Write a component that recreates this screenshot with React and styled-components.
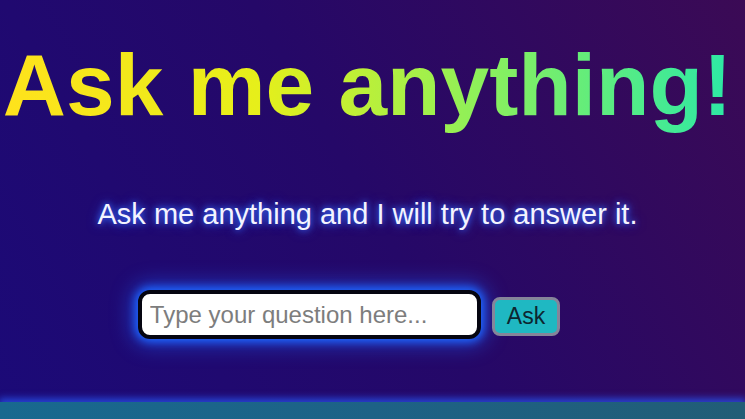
import React, { useState } from 'react';
import styled, { createGlobalStyle } from 'styled-components';

const GlobalStyle = createGlobalStyle`
  html, body {
    margin: 0;
    padding: 0;
    height: 100%;
  }
  body {
    font-family: "Liberation Sans", Arial, sans-serif;
    background: #200a6c;
  }
  #root {
    height: 100%;
  }
`;

const Page = styled.div`
  height: 419px;
  display: flex;
  flex-direction: column;
  overflow: hidden;
  background: linear-gradient(60deg, #1b0a78 0%, #250868 50%, #3b0a55 100%);
`;

const Main = styled.main`
  flex: 1;
  display: flex;
  flex-direction: column;
  align-items: center;
  padding: 33px 10px 0 0;
`;

const Title = styled.h1`
  margin: 0;
  font-size: 87.5px;
  font-weight: 700;
  line-height: 104px;
  background: linear-gradient(90deg, #ffe21c 0%, #e6ef1a 35%, #8ef05a 65%, #2ce8a6 100%);
  -webkit-background-clip: text;
  background-clip: text;
  color: transparent;
`;

const Subtitle = styled.p`
  margin: 61px 0 0;
  font-size: 29px;
  line-height: 33px;
  color: #f4f4ff;
  text-shadow: 0 0 6px #3a6cff, 0 0 12px #2a50e0;
`;

const Form = styled.form`
  margin: 59px 37px 0 0;
  display: flex;
  align-items: center;
  gap: 11px;
`;

const Input = styled.input`
  width: 319px;
  height: 41px;
  box-sizing: content-box;
  padding: 0 8px;
  border: 4px solid #050510;
  border-radius: 12px;
  background: #fff;
  font-family: "Liberation Sans", Arial, sans-serif;
  font-size: 24px;
  color: #222;
  box-shadow: 0 0 8px 3px #1e64ff, 0 0 20px 8px rgba(30, 100, 255, 0.45);
  outline: none;
  &::placeholder {
    color: #7d7d7d;
  }
`;

const AskButton = styled.button`
  height: 39px;
  padding: 0 12px;
  border: 3px solid #85859a;
  border-radius: 8px;
  background: #1fb8c2;
  color: #0d2630;
  font-family: "Liberation Sans", Arial, sans-serif;
  font-size: 23px;
  cursor: pointer;
  margin-top: 4px;
`;

const Footer = styled.footer`
  height: 17px;
  background: linear-gradient(90deg, #18698f 0%, #1d6286 50%, #215d76 100%);
  box-shadow: 0 -3px 7px 1px rgba(40, 80, 232, 0.8);
`;

export default function App() {
  const [question, setQuestion] = useState('');

  return (
    <Page>
      <GlobalStyle />
      <Main>
        <Title>Ask me anything!</Title>
        <Subtitle>Ask me anything and I will try to answer it.</Subtitle>
        <Form onSubmit={e => e.preventDefault()}>
          <Input
            value={question}
            placeholder="Type your question here..."
            onChange={e => setQuestion(e.currentTarget.value)}
          />
          <AskButton type="submit">Ask</AskButton>
        </Form>
      </Main>
      <Footer />
    </Page>
  );
}
